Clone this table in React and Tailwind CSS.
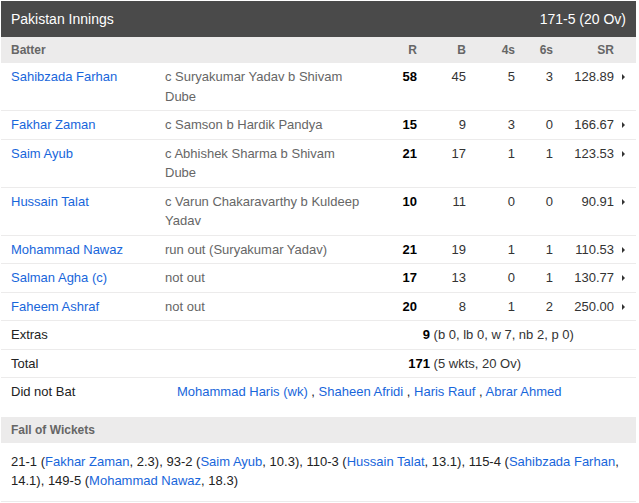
import React from "react";

const batters = [
  { name: "Sahibzada Farhan", out: "c Suryakumar Yadav b Shivam Dube", r: 58, b: 45, f: 5, s: 3, sr: "128.89" },
  { name: "Fakhar Zaman", out: "c Samson b Hardik Pandya", r: 15, b: 9, f: 3, s: 0, sr: "166.67" },
  { name: "Saim Ayub", out: "c Abhishek Sharma b Shivam Dube", r: 21, b: 17, f: 1, s: 1, sr: "123.53" },
  { name: "Hussain Talat", out: "c Varun Chakaravarthy b Kuldeep Yadav", r: 10, b: 11, f: 0, s: 0, sr: "90.91" },
  { name: "Mohammad Nawaz", out: "run out (Suryakumar Yadav)", r: 21, b: 19, f: 1, s: 1, sr: "110.53" },
  { name: "Salman Agha (c)", out: "not out", r: 17, b: 13, f: 0, s: 1, sr: "130.77" },
  { name: "Faheem Ashraf", out: "not out", r: 20, b: 8, f: 1, s: 2, sr: "250.00" },
];

const didNotBat = ["Mohammad Haris (wk)", "Shaheen Afridi", "Haris Rauf", "Abrar Ahmed"];

const fow = [
  ["21-1", "Fakhar Zaman", "2.3"],
  ["93-2", "Saim Ayub", "10.3"],
  ["110-3", "Hussain Talat", "13.1"],
  ["115-4", "Sahibzada Farhan", "14.1"],
  ["149-5", "Mohammad Nawaz", "18.3"],
];

const Arrow = () => (
  <span className="ml-[8px] mt-[7px] h-0 w-0 border-y-[3px] border-l-[3px] border-y-transparent border-l-[#333]" />
);

const App = () => {
  return (
    <div className="min-h-[503px] bg-white pl-[1px] pt-[1px] font-['Liberation_Sans',Arial,sans-serif] text-[13px] leading-[19.5px] text-[#222]">
      <div className="w-[635px]">
        {/* innings header */}
        <div className="flex justify-between bg-[#4a4a4a] px-[10px] py-[8px] text-[14px] leading-[20px] text-white">
          <span>Pakistan Innings</span>
          <span>171-5 (20 Ov)</span>
        </div>

        <div className="flex bg-[#ecebeb] px-[10px] py-1 text-[12px] font-bold leading-[18px] text-[#666]">
          <div className="w-[154px]">Batter</div>
          <div className="w-[203px]"></div>
          <div className="w-[49px] text-right">R</div>
          <div className="w-[49px] text-right">B</div>
          <div className="w-[49px] text-right">4s</div>
          <div className="w-[38px] text-right">6s</div>
          <div className="w-[61px] text-right">SR</div>
        </div>

        {batters.map((p, i) => (
          <div key={i} className="flex border-b border-[#ecebeb] px-[10px] py-1">
            <div className="w-[154px] text-[#1866db]">{p.name}</div>
            <div className="w-[203px] text-[#666]">{p.out}</div>
            <div className="w-[49px] text-right font-bold text-black">{p.r}</div>
            <div className="w-[49px] text-right text-[#333]">{p.b}</div>
            <div className="w-[49px] text-right text-[#333]">{p.f}</div>
            <div className="w-[38px] text-right text-[#333]">{p.s}</div>
            <div className="w-[61px] text-right text-[#333]">{p.sr}</div>
            <Arrow />
          </div>
        ))}

        <div className="flex border-b border-[#ecebeb] px-[10px] py-1">
          <div className="w-[370px]">Extras</div>
          <div className="w-[49px] text-right font-bold text-black">9</div>
          <div className="text-[#333]">&nbsp;(b 0, lb 0, w 7, nb 2, p 0)</div>
        </div>

        <div className="flex border-b border-[#ecebeb] px-[10px] py-1">
          <div className="w-[370px]">Total</div>
          <div className="w-[49px] text-right font-bold text-black">171</div>
          <div className="text-[#333]">&nbsp;(5 wkts, 20 Ov)</div>
        </div>

        <div className="flex px-[10px] pb-[15px] pt-1">
          <div className="w-[166px]">Did not Bat</div>
          <div className="flex-1">
            {didNotBat.map((n, i) => (
              <span key={i}>
                <span className="text-[#1866db]">{n}</span>
                {i < didNotBat.length - 1 && " , "}
              </span>
            ))}
          </div>
        </div>

        <div className="bg-[#ecebeb] px-[10px] py-1 text-[12px] font-bold leading-[18px] text-[#666]">
          Fall of Wickets
        </div>

        <div className="border-b border-[#ecebeb] px-[10px] pb-[10px] pt-[9px]">
          {fow.map(([score, name, over], i) => (
            <span key={i}>
              {score} (<span className="text-[#1866db]">{name}</span>, {over})
              {i < fow.length - 1 && ", "}
            </span>
          ))}
        </div>
      </div>
    </div>
  );
};

export default App;
